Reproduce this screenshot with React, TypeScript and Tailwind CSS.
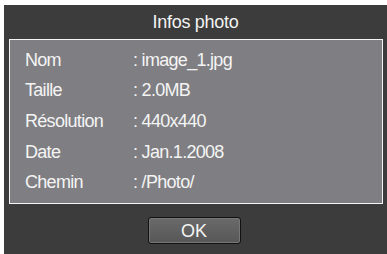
export default function App() {
  const rows = [
    ["Nom", ": image_1.jpg"],
    ["Taille", ": 2.0MB"],
    ["Résolution", ": 440x440"],
    ["Date", ": Jan.1.2008"],
    ["Chemin", ": /Photo/"],
  ];
  return (
    <div className="w-[387px] h-[254px] bg-white pl-[4px] pt-[5px] font-['Liberation_Sans',Arial,sans-serif]">
      <div className="h-full bg-[#3c3c3c] flex flex-col">
        <div className="h-[34px] flex items-center justify-center text-[18px] text-[#f2f2f2] tracking-[-0.3px]">
          Infos photo
        </div>
        <div className="ml-[5px] mr-[4px] h-[165px] bg-[#7f7f83] border border-[#f4f4f4] pt-[5px] pl-[15px]">
          {rows.map(([k, v]) => (
            <div key={k} className="h-[30.6px] flex items-center text-[18px] text-[#f4f4f4] tracking-[-0.7px]">
              <span className="w-[108px]">{k}</span>
              <span>{v}</span>
            </div>
          ))}
        </div>
        <div className="flex justify-center pt-[13px] pr-[3px]">
          <button className="w-[93px] h-[27px] rounded-[3px] border border-[#111] bg-gradient-to-b from-[#6a6a6a] to-[#575757] text-[#f4f4f4] text-[18px] leading-none shadow-[inset_0_0_0_1px_#777]">
            OK
          </button>
        </div>
      </div>
    </div>
  );
}
